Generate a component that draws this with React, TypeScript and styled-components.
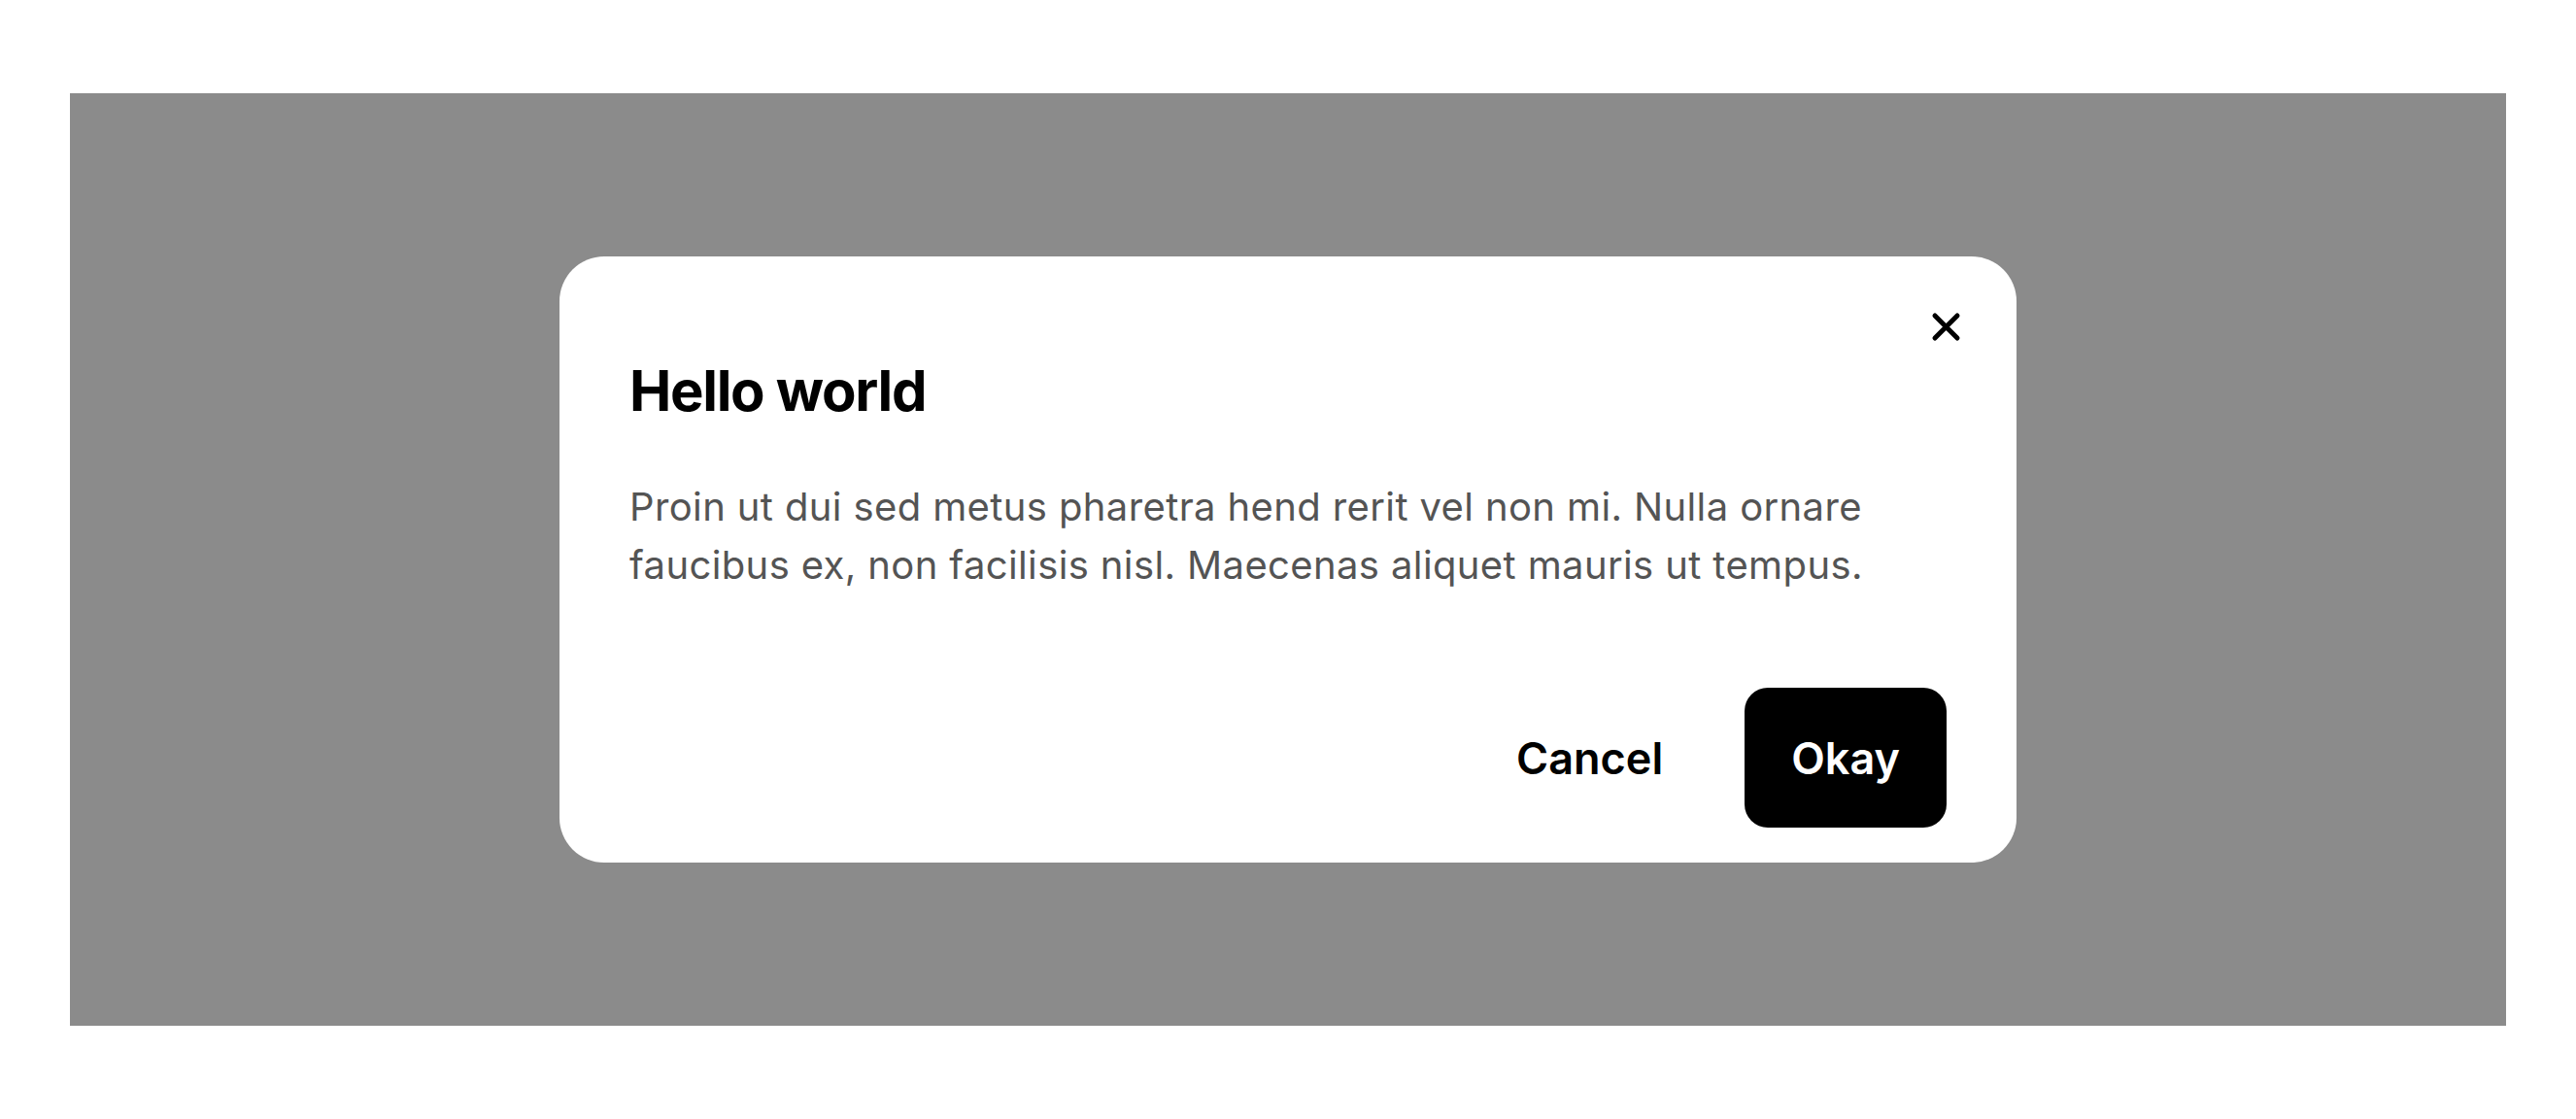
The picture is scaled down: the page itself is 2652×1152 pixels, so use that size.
import React from "react";
import styled, { createGlobalStyle } from "styled-components";

const GlobalStyle = createGlobalStyle`
  html, body {
    margin: 0;
    padding: 0;
    background: #ffffff;
  }

  body {
    font-family: Inter, "Noto Sans", "Liberation Sans", sans-serif;
    -webkit-font-smoothing: antialiased;
  }
`;

const Page = styled.div`
  padding: 96px 72px;
`;

const Backdrop = styled.div`
  height: 960px;

  display: flex;
  align-items: center;
  justify-content: center;

  background-color: #8b8b8b;
`;

const Dialog = styled.div`
  position: relative;

  width: 1500px;
  box-sizing: border-box;
  padding: 102px 72px 36px;

  display: flex;
  flex-direction: column;

  border-radius: 46px;
  background-color: #ffffff;
`;

const CloseButton = styled.button`
  position: absolute;
  top: 57px;
  right: 57px;

  width: 31px;
  height: 31px;
  padding: 0;

  display: flex;
  align-items: center;
  justify-content: center;

  border: none;
  background: transparent;
  cursor: pointer;
`;

const Title = styled.h2`
  margin: 0;

  font-size: 58px;
  line-height: 72px;
  font-weight: 700;
  letter-spacing: -1.3px;
  color: #000000;
`;

const Body = styled.p`
  margin: 54px 0 0;

  font-size: 40px;
  line-height: 60px;
  font-weight: 400;
  letter-spacing: 0.38px;
  color: #545454;
`;

const Footer = styled.div`
  margin-top: 96px;

  display: flex;
  justify-content: flex-end;
  gap: 36px;
`;

const Button = styled.button<{ $primary?: boolean }>`
  height: 144px;
  padding: 0 48px;

  border: none;
  border-radius: 24px;

  background-color: ${(p) => (p.$primary ? "#000000" : "transparent")};
  color: ${(p) => (p.$primary ? "#ffffff" : "#000000")};

  font-family: inherit;
  font-size: 45px;
  font-weight: 600;

  cursor: pointer;
`;

const CloseIcon = () => (
  <svg width="31" height="31" viewBox="0 0 31 31" fill="none">
    <path
      d="M4 4L27 27M27 4L4 27"
      stroke="#000000"
      strokeWidth="5"
      strokeLinecap="round"
    />
  </svg>
);

export default function App() {
  return (
    <>
      <GlobalStyle />
      <Page>
        <Backdrop>
          <Dialog role="dialog">
            <CloseButton aria-label="Close">
              <CloseIcon />
            </CloseButton>
            <Title>Hello world</Title>
            <Body>
              Proin ut dui sed metus pharetra hend rerit vel non mi. Nulla ornare
              faucibus ex, non facilisis nisl. Maecenas aliquet mauris ut tempus.
            </Body>
            <Footer>
              <Button>Cancel</Button>
              <Button $primary>Okay</Button>
            </Footer>
          </Dialog>
        </Backdrop>
      </Page>
    </>
  );
}
